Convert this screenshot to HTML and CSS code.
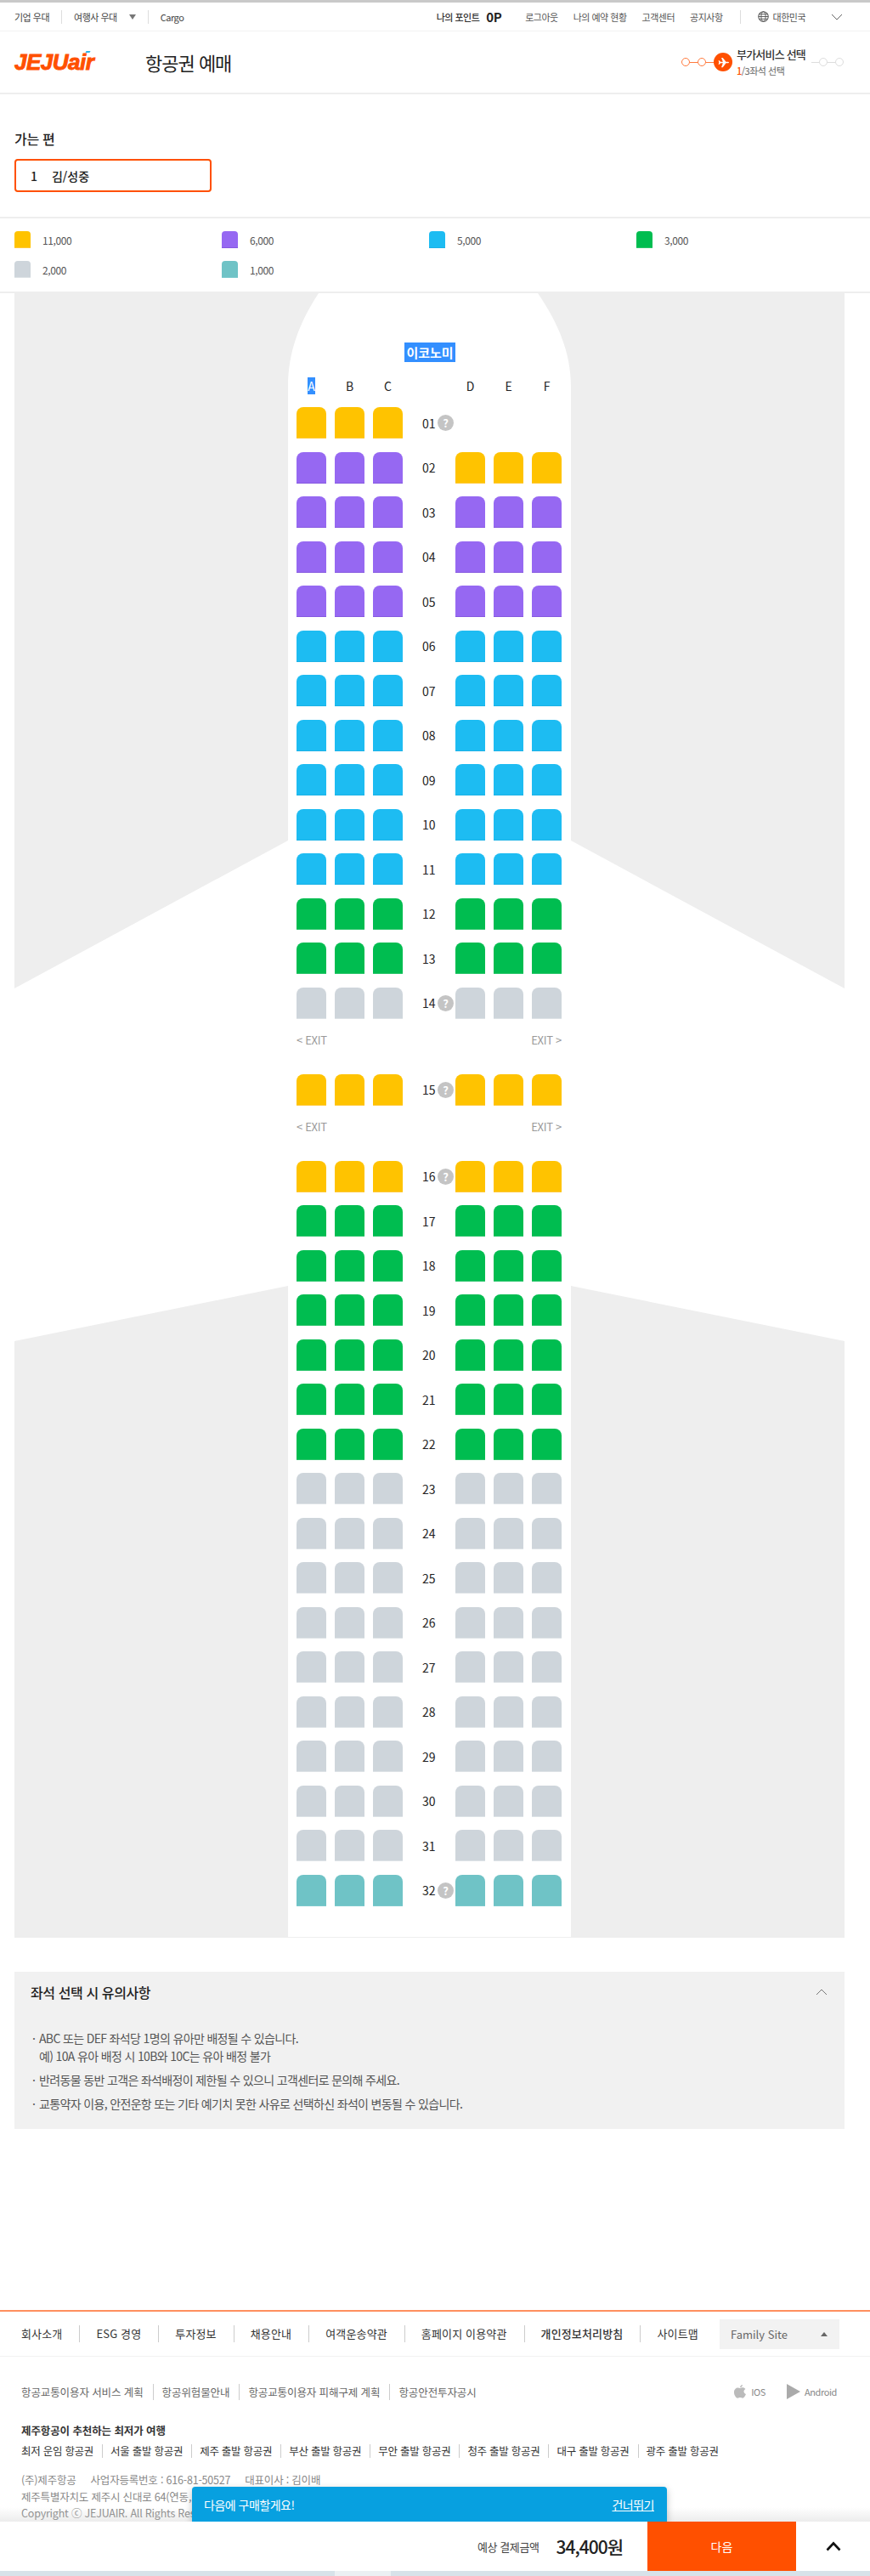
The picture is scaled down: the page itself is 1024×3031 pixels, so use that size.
FILE: index.html
```html
<!DOCTYPE html>
<html lang="ko">
<head>
    <meta charset="UTF-8">
    <meta name="viewport" content="width=device-width, initial-scale=1.0">
    <title>항공권 예매</title>
    <link rel="stylesheet" href="styles.css">
</head>
<body>
<div class="page">
    <div class="topbar">
        <div class="topbar-left">
            <a class="top-link">기업 우대</a>
            <a class="top-link has-divider">여행사 우대<span class="down-tri"></span></a>
            <a class="top-link has-divider">Cargo</a>
        </div>
        <div class="topbar-right">
            <span class="my-point">나의 포인트<b>0P</b></span>
            <a class="util-link">로그아웃</a>
            <a class="util-link">나의 예약 현황</a>
            <a class="util-link">고객센터</a>
            <a class="util-link">공지사항</a>
            <span class="lang">
                <svg class="globe" viewBox="0 0 14 14" width="13" height="13"><circle cx="7" cy="7" r="6.2" fill="none" stroke="#555" stroke-width="1.1"/><ellipse cx="7" cy="7" rx="2.8" ry="6.2" fill="none" stroke="#555"/><path d="M1 7h12M1.8 4h10.4M1.8 10h10.4" stroke="#555" fill="none"/></svg>
                대한민국
            </span>
            <svg class="lang-arrow" viewBox="0 0 14 8" width="14" height="8"><path d="M1 1l6 6 6-6" fill="none" stroke="#666" stroke-width="1"/></svg>
        </div>
    </div>

    <header class="header">
        <div class="logo"><span>JEJU</span><span class="logo-air">air</span><i class="logo-accent"></i></div>
        <h1 class="page-title">항공권 예매</h1>
        <div class="steps">
            <i class="dot"></i><i class="line"></i><i class="dot"></i><i class="line"></i>
            <span class="step-now">
                <svg viewBox="0 0 24 24" width="15" height="15"><path d="M2.500 8.500h2l2 2.300H11L8 3h2.800l6 7.800H20c1.400 0 2.500.5 2.500 1.200s-1.100 1.200-2.500 1.200h-3.200l-6 7.800H8l3-7.800H6.500l-2 2.300h-2l1.200-3.500z" fill="#fff"/></svg>
            </span>
            <div class="step-text">
                <strong>부가서비스 선택</strong>
                <span><em>1</em>/3좌석 선택</span>
            </div>
            <i class="line off"></i><i class="dot off"></i><i class="line off"></i><i class="dot off"></i>
        </div>
    </header>

    <section class="passenger">
        <h2>가는 편</h2>
        <div class="passenger-box"><span>1</span><span>김/성중</span></div>
    </section>

    <ul class="legend">
        <li><i class="swatch c-yellow"></i>11,000</li>
        <li><i class="swatch c-purple"></i>6,000</li>
        <li><i class="swatch c-blue"></i>5,000</li>
        <li><i class="swatch c-green"></i>3,000</li>
        <li><i class="swatch c-gray"></i>2,000</li>
        <li><i class="swatch c-teal"></i>1,000</li>
    </ul>

    <section class="seatmap">
        <svg class="cabin" viewBox="0 0 977 1935" width="977" height="1935">
            <path d="M322 1934V1168L0 1233V818L322 644V110C322 70 335 35 358 0H616C640 35 655 70 655 110V644L977 818V1233L655 1168V1934Z" fill="#fff"/>
        </svg>
        <div class="cabin-inner" id="cabin">
            <div class="cabin-title"><span class="selected">이코노미</span></div>
            <div class="col-head">
                <span><b class="selected">A</b></span><span>B</span><span>C</span>
                <span class="aisle"></span>
                <span>D</span><span>E</span><span>F</span>
            </div>
            <div id="rows"></div>
        </div>
    </section>

    <section class="notice">
        <div class="notice-head">
            <h3>좌석 선택 시 유의사항</h3>
            <svg viewBox="0 0 14 8" width="14" height="8"><path d="M1 7l6-6 6 6" fill="none" stroke="#777"/></svg>
        </div>
        <ul class="notice-list">
            <li>ABC 또는 DEF 좌석당 1명의 유아만 배정될 수 있습니다.<br>예) 10A 유아 배정 시 10B와 10C는 유아 배정 불가</li>
            <li>반려동물 동반 고객은 좌석배정이 제한될 수 있으니 고객센터로 문의해 주세요.</li>
            <li>교통약자 이용, 안전운항 또는 기타 예기치 못한 사유로 선택하신 좌석이 변동될 수 있습니다.</li>
        </ul>
    </section>

    <footer class="footer">
        <div class="foot-main">
            <nav class="foot-nav">
                <a>회사소개</a><a>ESG 경영</a><a>투자정보</a><a>채용안내</a><a>여객운송약관</a><a>홈페이지 이용약관</a><a class="strong">개인정보처리방침</a><a>사이트맵</a>
            </nav>
            <div class="family">Family Site<span class="up-tri"></span></div>
        </div>
        <div class="foot-sub">
            <nav class="foot-policy">
                <a>항공교통이용자 서비스 계획</a><a>항공위험물안내</a><a>항공교통이용자 피해구제 계획</a><a>항공안전투자공시</a>
            </nav>
            <div class="apps">
                <span class="app">
                    <svg viewBox="0 0 16 20" width="16" height="18" preserveAspectRatio="none"><path d="M11 1c0 2-1.500 3.500-3 3.500C8 2.800 9.500 1.200 11 1zM8 5.500c1 0 1.800-.7 3.200-.7 1.200 0 2.400.6 3.200 1.800-2.800 1.600-2.300 5.500.6 6.600-.8 2.300-2.500 5.300-4 5.300-1 0-1.500-.7-2.800-.7s-1.900.7-2.900.7C3.400 18.500 1 14.500 1 11c0-3.700 2.300-5.900 4.600-5.900 1 0 1.700.4 2.400.4z" fill="#bbb"/></svg>
                    IOS
                </span>
                <span class="app">
                    <svg viewBox="0 0 16 18" width="16" height="18"><path d="M0 0l16 9L0 18z" fill="#aaa"/></svg>
                    Android
                </span>
            </div>
        </div>
        <div class="foot-recommend">
            <h4>제주항공이 추천하는 최저가 여행</h4>
            <nav class="foot-routes">
                <a>최저 운임 항공권</a><a>서울 출발 항공권</a><a>제주 출발 항공권</a><a>부산 출발 항공권</a><a>무안 출발 항공권</a><a>청주 출발 항공권</a><a>대구 출발 항공권</a><a>광주 출발 항공권</a>
            </nav>
        </div>
        <div class="foot-company">
            <p><span>(주)제주항공</span><span>사업자등록번호 : 616-81-50527</span><span>대표이사 : 김이배</span></p>
            <p class="cut">제주특별자치도 제주시 신대로 64(연동,</p>
            <p class="cut">Copyright ⓒ JEJUAIR. All Rights Res</p>
        </div>
    </footer>

    <div class="bottom-fixed">
        <div class="toast"><span>다음에 구매할게요!</span><a>건너뛰기</a></div>
        <div class="paybar">
            <span class="pay-label">예상 결제금액</span>
            <strong class="pay-amount">34,400원</strong>
            <a class="next-btn">다음</a>
            <a class="top-btn">
                <svg viewBox="0 0 18 12" width="18" height="12"><path d="M1.500 10.500L9 2.500l7.500 8" fill="none" stroke="#111" stroke-width="2.600"/></svg>
            </a>
        </div>
        <div class="scroll-strip"><i></i></div>
    </div>
</div>
<script src="seats.js"></script>
</body>
</html>
```

FILE: styles.css
```css
* {
    box-sizing: border-box;
}
html, body {
    margin: 0;
    padding: 0;
}
body {
    font-family: "Noto Sans CJK KR", "Noto Sans", sans-serif;
    color: #222;
    background: #fff;
}
ul, h1, h2, h3, h4, p {
    margin: 0;
    padding: 0;
    list-style: none;
}
.page {
    position: relative;
    width: 1024px;
    height: 3031px;
    overflow: hidden;
    border-top: 3px solid #c9c9c9;
}

/* top utility bar */
.topbar {
    height: 34px;
    padding: 0 17px;
    display: flex;
    justify-content: space-between;
    align-items: center;
    border-bottom: 1px solid #f2f2f2;
    font-size: 11px;
    letter-spacing: -0.5px;
    color: #444;
}
.topbar-left, .topbar-right {
    display: flex;
    align-items: center;
}
.top-link.has-divider {
    margin-left: 14px;
    padding-left: 14px;
    border-left: 1px solid #ddd;
    display: flex;
    align-items: center;
}
.down-tri {
    display: inline-block;
    margin-left: 14px;
    border-left: 4px solid transparent;
    border-right: 4px solid transparent;
    border-top: 6px solid #777;
}
.my-point {
    display: flex;
    align-items: center;
    color: #333;
    font-weight: 500;
}
.my-point b {
    margin-left: 8px;
    font-size: 15px;
    color: #222;
}
.util-link {
    margin-left: 18px;
    color: #555;
}
.my-point + .util-link {
    margin-left: 28px;
}
.lang {
    display: flex;
    align-items: center;
    gap: 5px;
    margin-left: 20px;
    padding-left: 20px;
    border-left: 1px solid #ddd;
    color: #555;
}
.lang-arrow {
    margin-left: 30px;
    margin-right: 15px;
}

/* header */
.header {
    height: 74px;
    padding: 0 31px 0 17px;
    display: flex;
    align-items: center;
    border-bottom: 2px solid #eee;
}
.logo {
    position: relative;
    width: 154px;
    font-family: "Liberation Sans", sans-serif;
    font-size: 26px;
    line-height: 1;
    font-weight: 700;
    font-style: italic;
    letter-spacing: -0.5px;
    color: #ff5000;
    -webkit-text-stroke: 0.9px #ff5000;
}
.logo-accent {
    position: absolute;
    left: 84px;
    top: 0;
    width: 5px;
    height: 2px;
    background: #2cb5e8;
    transform: skewX(-30deg);
}
.page-title {
    font-size: 22px;
    font-weight: 400;
    letter-spacing: -1px;
    color: #222;
}
.steps {
    margin-left: auto;
    display: flex;
    align-items: center;
}
.dot {
    width: 10px;
    height: 10px;
    border: 1px solid #ff7a3d;
    border-radius: 50%;
}
.line {
    width: 9px;
    height: 1px;
    background: #ff7a3d;
}
.dot.off {
    border-color: #ddd;
}
.line.off {
    background: #ddd;
}
.step-now {
    width: 22px;
    height: 22px;
    border-radius: 50%;
    background: #ff5000;
    display: flex;
    align-items: center;
    justify-content: center;
}
.step-text {
    width: 88px;
    margin-left: 5px;
    display: flex;
    flex-direction: column;
    gap: 2px;
}
.step-text strong {
    font-size: 13px;
    line-height: 18px;
    font-weight: 500;
    letter-spacing: -0.8px;
    color: #333;
}
.step-text span {
    font-size: 11px;
    line-height: 16px;
    letter-spacing: -0.5px;
    color: #666;
}
.step-text em {
    font-style: normal;
    color: #ff5000;
    font-weight: 500;
}

/* passenger */
.passenger {
    height: 146px;
    padding: 40px 17px 0;
    border-bottom: 2px solid #eee;
}
.passenger h2 {
    font-size: 16px;
    line-height: 24px;
    font-weight: 500;
    letter-spacing: -0.3px;
}
.passenger-box {
    margin-top: 12px;
    width: 232px;
    height: 39px;
    padding: 0 17px;
    display: flex;
    align-items: center;
    gap: 17px;
    border: 2px solid #ff5000;
    border-radius: 4px;
    font-size: 14px;
    font-weight: 500;
}

/* legend */
.legend {
    height: 88px;
    padding: 15px 17px 0;
    display: grid;
    grid-template-columns: repeat(4, 244px);
    grid-auto-rows: 35px;
    font-size: 12px;
    letter-spacing: -0.4px;
    color: #555;
    border-bottom: 2px solid #eee;
}
.legend li {
    display: flex;
    align-items: center;
    gap: 14px;
    height: 20px;
}
.swatch {
    width: 19px;
    height: 20px;
    border-radius: 4px 4px 0 0;
}
.c-yellow { background: #ffc300; border-bottom: 1px solid #ffc93a; }
.c-purple { background: #9668f2; border-bottom: 1px solid #8659e0; }
.c-blue { background: #1dbcf2; border-bottom: 1px solid #1cb2e6; }
.c-green { background: #00bd50; border-bottom: 1px solid #2cc56c; }
.c-gray { background: #ced5db; border-bottom: 1px solid #dde2e6; }
.c-teal { background: #6fc3c6; border-bottom: 1px solid #7ccacd; }

/* seat map */
.seatmap {
    position: relative;
    margin: 0 17px;
    width: 977px;
    height: 1935px;
    background: #eee;
}
.cabin {
    position: absolute;
    left: 0;
    top: 0;
}
.cabin-inner {
    position: relative;
    margin-left: 332px;
    width: 312px;
}
.cabin-title {
    padding: 58px 0 0 2px;
    height: 81px;
    text-align: center;
    font-size: 15px;
    line-height: 23px;
    font-weight: 700;
}
.selected {
    background: #338fff;
    color: #fff;
}
.cabin-title .selected {
    display: inline-block;
    width: 60px;
}
.col-head {
    height: 53px;
    padding-top: 18px;
    display: flex;
    font-size: 14px;
    line-height: 21px;
    color: #222;
}
.col-head span {
    width: 35px;
    margin-right: 10px;
    text-align: center;
    flex: none;
}
.col-head b {
    font-weight: 400;
}
.col-head .aisle {
    width: 52px;
    margin-right: 0;
}
.seat-row {
    height: 37px;
    margin-bottom: 15.5px;
    display: flex;
}
.seat {
    flex: none;
    width: 35px;
    height: 37px;
    margin-right: 10px;
    border-radius: 8px 8px 0 0;
}
.seat.empty {
    background: none;
    border: 0;
}
.row-no {
    flex: none;
    width: 52px;
    padding-left: 13px;
    display: flex;
    align-items: center;
    font-size: 14px;
    color: #222;
    position: relative;
}
.help {
    position: absolute;
    left: 31px;
    top: 9px;
    width: 19px;
    height: 19px;
    border-radius: 50%;
    background: #c4c4c4;
    color: #fff;
    font-size: 13px;
    line-height: 19px;
    font-weight: 700;
    text-align: center;
}
.exit-row {
    height: 19px;
    margin-bottom: 30.7px;
    display: flex;
    justify-content: space-between;
    align-items: center;
    width: 312px;
    font-size: 13px;
    letter-spacing: -0.3px;
    color: #999;
}

/* notice */
.notice {
    margin: 40px 30px 0 17px;
    width: 977px;
    height: 185px;
    padding: 12px 20px 0 19px;
    background: #f1f1f1;
}
.notice-head {
    display: flex;
    justify-content: space-between;
    align-items: center;
    height: 24px;
}
.notice-head h3 {
    font-size: 16px;
    font-weight: 500;
    letter-spacing: -0.4px;
}
.notice-list {
    margin-top: 32px;
    font-size: 14px;
    line-height: 21px;
    letter-spacing: -0.65px;
    color: #555;
}
.notice-list li {
    position: relative;
    padding-left: 8px;
    margin-bottom: 7px;
    margin-left: 2px;
}
.notice-list li::before {
    content: "·";
    position: absolute;
    left: 0;
    top: 0;
}

/* footer */
.footer {
    margin-top: 213px;
    border-top: 2px solid #ff8f5f;
}
.foot-main {
    height: 53px;
    padding: 0 36px 0 25px;
    display: flex;
    justify-content: space-between;
    align-items: center;
    border-bottom: 1px solid #f2f2f2;
}
.foot-nav {
    display: flex;
    font-size: 13px;
    letter-spacing: 0.15px;
    color: #333;
}
.foot-nav a {
    padding-right: 20px;
    margin-right: 19px;
    border-right: 1px solid #ccc;
    line-height: 20px;
}
.foot-nav a:last-child {
    margin-right: 0;
    padding-right: 0;
    border-right: 0;
}
.foot-nav .strong {
    font-weight: 500;
}
.family {
    width: 141px;
    height: 35px;
    padding: 0 14px 0 13px;
    display: flex;
    justify-content: space-between;
    align-items: center;
    background: #f2f2f2;
    font-size: 13px;
    color: #666;
}
.up-tri {
    border-left: 4px solid transparent;
    border-right: 4px solid transparent;
    border-bottom: 5px solid #666;
}
.foot-sub {
    height: 78px;
    padding: 4px 39px 0 25px;
    display: flex;
    justify-content: space-between;
    align-items: center;
}
.foot-policy {
    display: flex;
    font-size: 12.5px;
    letter-spacing: -0.1px;
    color: #666;
}
.foot-policy a {
    padding-right: 11px;
    margin-right: 10px;
    border-right: 1px solid #ccc;
}
.foot-policy a:last-child {
    border-right: 0;
}
.apps {
    display: flex;
    gap: 25px;
    font-size: 11px;
    letter-spacing: -0.4px;
    color: #888;
}
.app {
    display: flex;
    align-items: center;
    gap: 5px;
}
.foot-recommend {
    padding: 0 25px;
}
.foot-recommend h4 {
    font-size: 12.5px;
    line-height: 18px;
    font-weight: 700;
    letter-spacing: -0.1px;
    color: #333;
}
.foot-routes {
    margin-top: 7px;
    display: flex;
    font-size: 12.5px;
    letter-spacing: -0.27px;
    color: #333;
}
.foot-routes a {
    padding-right: 10px;
    margin-right: 9px;
    border-right: 1px solid #ccc;
    line-height: 16px;
}
.foot-routes a:last-child {
    border-right: 0;
}
.foot-company {
    margin-top: 16px;
    padding: 0 25px;
    font-size: 12.5px;
    line-height: 19.5px;
    letter-spacing: -0.2px;
    color: #888;
}
.foot-company span {
    margin-right: 17px;
}
.foot-company .cut {
    width: 201px;
    white-space: nowrap;
    overflow: hidden;
}

/* fixed bottom bar */
.bottom-fixed {
    position: absolute;
    left: 0;
    right: 0;
    bottom: 0;
    background: linear-gradient(rgba(200,200,200,0), rgba(200,200,200,0.35)) no-repeat 0 24px / 100% 17px;
}
.toast {
    margin-left: 226px;
    width: 559px;
    height: 41px;
    padding: 0 15px 0 14px;
    display: flex;
    justify-content: space-between;
    align-items: center;
    background: #07a0e0;
    border-radius: 4px 4px 0 0;
    box-shadow: 0 3px 8px rgba(0,0,0,0.25);
    font-size: 14px;
    letter-spacing: -0.5px;
    color: #fff;
    position: relative;
}
.toast a {
    text-decoration: underline;
}
.paybar {
    position: relative;
    height: 58px;
    background: #fff;
    display: flex;
    justify-content: flex-end;
    align-items: center;
}
.pay-label {
    font-size: 13px;
    letter-spacing: -0.4px;
    color: #444;
}
.pay-amount {
    margin: 0 29px 0 20px;
    font-size: 21px;
    font-weight: 500;
    letter-spacing: -1px;
    color: #222;
}
.next-btn {
    width: 175px;
    height: 58px;
    display: flex;
    justify-content: center;
    align-items: center;
    background: #ff5000;
    color: #fff;
    font-size: 14px;
}
.top-btn {
    width: 87px;
    display: flex;
    justify-content: center;
    align-items: center;
}
.scroll-strip {
    height: 6px;
    background: #d7e2e9;
    position: relative;
}
.scroll-strip i {
    position: absolute;
    left: 394px;
    top: 0;
    width: 66px;
    height: 6px;
    background: #ebf0f3;
}
```

FILE: seats.js
```js
// seat colour per row, left block then right block
var rowColors = {
    1: ['yellow', null], 2: ['purple', 'yellow'], 3: ['purple', 'purple'], 4: ['purple', 'purple'], 5: ['purple', 'purple'],
    6: ['blue', 'blue'], 7: ['blue', 'blue'], 8: ['blue', 'blue'], 9: ['blue', 'blue'], 10: ['blue', 'blue'], 11: ['blue', 'blue'],
    12: ['green', 'green'], 13: ['green', 'green'], 14: ['gray', 'gray'],
    15: ['yellow', 'yellow'], 16: ['yellow', 'yellow'],
    17: ['green', 'green'], 18: ['green', 'green'], 19: ['green', 'green'], 20: ['green', 'green'], 21: ['green', 'green'], 22: ['green', 'green'],
    32: ['teal', 'teal']
};
var helpRows = [1, 14, 15, 16, 32];
var exitAfter = [14, 15];

function seats(color) {
    var html = '';
    for (var i = 0; i < 3; i++) {
        html += color ? '<i class="seat c-' + color + '"></i>' : '<i class="seat empty"></i>';
    }
    return html;
}

var html = '';
for (var n = 1; n <= 32; n++) {
    var c = rowColors[n] || ['gray', 'gray'];
    var label = n < 10 ? '0' + n : '' + n;
    var help = helpRows.indexOf(n) >= 0 ? '<span class="help">?</span>' : '';
    html += '<div class="seat-row">' + seats(c[0]) + '<span class="row-no">' + label + help + '</span>' + seats(c[1]) + '</div>';
    if (exitAfter.indexOf(n) >= 0) {
        html += '<div class="exit-row"><span>&lt; EXIT</span><span>EXIT &gt;</span></div>';
    }
}
document.getElementById('rows').innerHTML = html;
```
